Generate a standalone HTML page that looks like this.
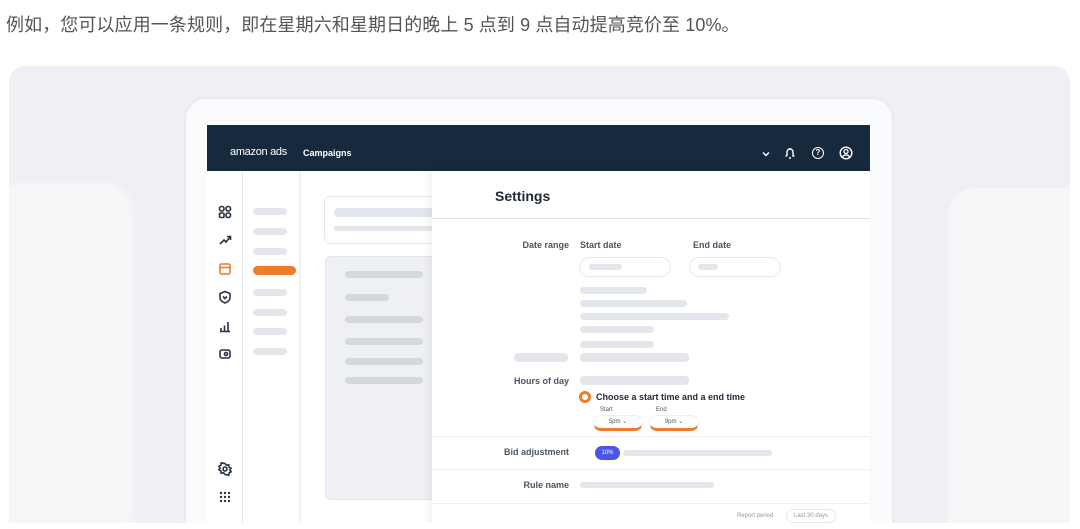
<!DOCTYPE html>
<html><head><meta charset="utf-8"><style>
*{margin:0;padding:0;box-sizing:border-box}
body{width:1080px;height:529px;background:#fff;position:relative;overflow:hidden;font-family:"Liberation Sans","Noto Sans CJK SC",sans-serif}
.a{position:absolute}
.bar{position:absolute;background:#e3e6ea;border-radius:4px;height:7px}
.lbl{position:absolute;font-size:9px;font-weight:bold;color:#4a5565;text-align:right;width:110px}
svg.i{position:absolute;left:218px;width:14px;height:14px;fill:none;stroke:#2a3444;stroke-width:1.6}
</style></head><body>
<div class="a" style="left:6px;top:11px;font-size:18px;color:#555;letter-spacing:0.1px">例如，您可以应用一条规则，即在星期六和星期日的晚上 5 点到 9 点自动提高竞价至 10%。</div>
<div class="a" style="left:9px;top:66px;width:1061px;height:460px;background:#eef0f4;border-radius:16px 16px 0 0"></div>
<div class="a" style="left:9px;top:188px;width:118px;height:340px;background:#f5f6f8;border-radius:0 26px 0 0;box-shadow:2px -2px 10px rgba(255,255,255,.9)"></div>
<div class="a" style="left:948px;top:188px;width:122px;height:340px;background:#f5f6f8;border-radius:26px 0 0 0"></div>
<div class="a" style="left:186px;top:99px;width:706px;height:430px;background:#fafbfc;border-radius:20px 20px 0 0;box-shadow:0 0 6px rgba(0,0,0,.06)"></div>
<div class="a" style="left:207px;top:125px;width:663px;height:46px;background:#172a3d"></div>
<div class="a" style="left:230px;top:146px;color:#fff;font-size:11px;letter-spacing:-0.3px">amazon ads</div>
<div class="a" style="left:303px;top:148px;color:#fff;font-size:9px;font-weight:bold">Campaigns</div>
<svg class="a" style="left:760px;top:148px" width="12" height="12" viewBox="0 0 12 12"><path d="M3 4.5l3 3 3-3" stroke="#fff" stroke-width="1.4" fill="none"/></svg>
<svg class="a" style="left:783px;top:146px" width="14" height="14" viewBox="0 0 14 14"><path d="M4 10V6a3 3 0 016 0v4h1.5M2.5 10H4M6 12h2M7 2v1" stroke="#fff" stroke-width="1.4" fill="none"/></svg>
<div class="a" style="left:812px;top:147px;width:12px;height:12px;border:1.5px solid #fff;border-radius:50%;color:#fff;font-size:8px;text-align:center;line-height:9px;font-weight:bold">?</div>
<svg class="a" style="left:839px;top:146px" width="14" height="14" viewBox="0 0 14 14"><circle cx="7" cy="7" r="5.8" stroke="#fff" stroke-width="1.4" fill="none"/><circle cx="7" cy="5.5" r="2" stroke="#fff" stroke-width="1.3" fill="none"/><path d="M3.5 11a4 4 0 017 0" stroke="#fff" stroke-width="1.3" fill="none"/></svg>
<div class="a" style="left:207px;top:171px;width:663px;height:358px;background:#fff"></div>
<div class="a" style="left:242px;top:171px;width:1px;height:358px;background:#e6e8ec"></div>
<div class="a" style="left:299px;top:171px;width:2px;height:358px;background:#eef0f3"></div>
<svg class="i" style="top:205px" viewBox="0 0 14 14"><rect x="1.5" y="1.5" width="4.5" height="4.5" rx="2"/><rect x="8" y="1.5" width="4.5" height="4.5" rx="2"/><rect x="1.5" y="8" width="4.5" height="4.5" rx="1"/><rect x="8" y="8" width="4.5" height="4.5" rx="2"/></svg>
<svg class="i" style="top:233px" viewBox="0 0 14 14"><path d="M2 11l4-4 2 2 4-5M9 3.5h3.5V7"/></svg>
<svg class="i" style="top:262px;stroke:#f07b2a" viewBox="0 0 14 14"><rect x="2" y="2" width="10" height="10" rx="1.5"/><path d="M2 5.5h10"/></svg>
<svg class="i" style="top:290px" viewBox="0 0 14 14"><path d="M7 1.5l5 2v4c0 2.5-2.5 4.5-5 5.5-2.5-1-5-3-5-5.5v-4z"/><path d="M5 6.5l2 2 2-2" /></svg>
<svg class="i" style="top:319px" viewBox="0 0 14 14"><path d="M3 12V9M6.5 12V6.5M10 12V3M2 12.5h10"/></svg>
<svg class="i" style="top:347px" viewBox="0 0 14 14"><rect x="2" y="3" width="10" height="8" rx="2"/><circle cx="8" cy="7" r="1.5"/></svg>
<svg class="i" style="top:462px" viewBox="0 0 14 14"><circle cx="7" cy="7" r="2"/><path d="M7 1.5l1.5 1.8 2.3-.5.3 2.3 2 1.2-1.3 1.7 1.3 1.7-2 1.2-.3 2.3-2.3-.5L7 12.5 5.5 10.7l-2.3.5-.3-2.3-2-1.2 1.3-1.7L.9 4.3l2-1.2.3-2.3 2.3.5z"/></svg>
<svg class="i" style="top:490px;fill:#2a3444;stroke:none" viewBox="0 0 14 14"><circle cx="3" cy="3" r="1.2"/><circle cx="7" cy="3" r="1.2"/><circle cx="11" cy="3" r="1.2"/><circle cx="3" cy="7" r="1.2"/><circle cx="7" cy="7" r="1.2"/><circle cx="11" cy="7" r="1.2"/><circle cx="3" cy="11" r="1.2"/><circle cx="7" cy="11" r="1.2"/><circle cx="11" cy="11" r="1.2"/></svg>
<div class="bar" style="left:253px;top:208px;width:34px"></div>
<div class="bar" style="left:253px;top:228px;width:34px"></div>
<div class="bar" style="left:253px;top:248px;width:34px"></div>
<div class="a" style="left:253px;top:266px;width:43px;height:9px;background:#f07b2a;border-radius:5px"></div>
<div class="bar" style="left:253px;top:289px;width:34px"></div>
<div class="bar" style="left:253px;top:309px;width:34px"></div>
<div class="bar" style="left:253px;top:328px;width:34px"></div>
<div class="bar" style="left:253px;top:348px;width:34px"></div>
<div class="a" style="left:324px;top:196px;width:120px;height:48px;border:1px solid #e6e8ec;border-radius:5px"></div>
<div class="bar" style="left:334px;top:208px;width:100px;height:9px"></div>
<div class="bar" style="left:334px;top:226px;width:100px;height:5px"></div>
<div class="a" style="left:325px;top:256px;width:120px;height:244px;background:#eef0f4;border:1px solid #e3e6ea;border-radius:6px"></div>
<div class="bar" style="left:345px;top:271px;width:78px;background:#d4d8de"></div>
<div class="bar" style="left:345px;top:294px;width:44px;background:#d4d8de"></div>
<div class="bar" style="left:345px;top:316px;width:78px;background:#d4d8de"></div>
<div class="bar" style="left:345px;top:338px;width:78px;background:#d4d8de"></div>
<div class="bar" style="left:345px;top:358px;width:78px;background:#d4d8de"></div>
<div class="bar" style="left:345px;top:377px;width:78px;background:#d4d8de"></div>
<div class="a" style="left:432px;top:171px;width:438px;height:358px;background:#fff;box-shadow:-4px 0 8px rgba(0,0,0,.05)"></div>
<div class="a" style="left:495px;top:188px;font-size:14px;font-weight:bold;color:#1f2937">Settings</div>
<div class="a" style="left:432px;top:218px;width:438px;height:1px;background:#dde0e5"></div>
<div class="lbl" style="left:459px;top:240px">Date range</div>
<div class="a" style="left:580px;top:240px;font-size:9px;font-weight:bold;color:#4a5565">Start date</div>
<div class="a" style="left:693px;top:240px;font-size:9px;font-weight:bold;color:#4a5565">End date</div>
<div class="a" style="left:579px;top:257px;width:92px;height:20px;border:1px solid #e6e8ec;border-radius:10px"></div>
<div class="bar" style="left:589px;top:264px;width:33px;height:6px"></div>
<div class="a" style="left:689px;top:257px;width:92px;height:20px;border:1px solid #e6e8ec;border-radius:10px"></div>
<div class="bar" style="left:698px;top:264px;width:20px;height:6px"></div>
<div class="bar" style="left:580px;top:287px;width:67px"></div>
<div class="bar" style="left:580px;top:300px;width:107px"></div>
<div class="bar" style="left:580px;top:313px;width:149px"></div>
<div class="bar" style="left:580px;top:326px;width:74px"></div>
<div class="bar" style="left:580px;top:341px;width:74px"></div>
<div class="bar" style="left:514px;top:353px;width:54px;height:9px"></div>
<div class="bar" style="left:580px;top:353px;width:109px;height:9px"></div>
<div class="lbl" style="left:459px;top:376px">Hours of day</div>
<div class="bar" style="left:580px;top:376px;width:109px;height:9px"></div>
<div class="a" style="left:579px;top:391px;width:12px;height:12px;border:3px solid #f07b2a;border-radius:50%"></div>
<div class="a" style="left:596px;top:392px;font-size:9px;font-weight:bold;color:#1f2937">Choose a start time and a end time</div>
<div class="a" style="left:600px;top:407px;font-size:6px;color:#4a5565">Start</div>
<div class="a" style="left:656px;top:407px;font-size:6px;color:#4a5565">End</div>
<div class="a" style="left:593px;top:415px;width:50px;height:16px;border:1px solid #eee;border-bottom:3px solid #f07b2a;border-radius:8px;font-size:6px;text-align:center;line-height:13px;color:#555">5pm ⌄</div>
<div class="a" style="left:649px;top:415px;width:50px;height:16px;border:1px solid #eee;border-bottom:3px solid #f07b2a;border-radius:8px;font-size:6px;text-align:center;line-height:13px;color:#555">9pm ⌄</div>
<div class="a" style="left:432px;top:436px;width:438px;height:1px;background:#eceef1"></div>
<div class="lbl" style="left:459px;top:447px">Bid adjustment</div>
<div class="a" style="left:595px;top:446px;width:25px;height:14px;background:#4b55e0;border-radius:7px;color:#fff;font-size:6px;text-align:center;line-height:14px">10%</div>
<div class="bar" style="left:623px;top:450px;width:149px;height:6px"></div>
<div class="a" style="left:432px;top:469px;width:438px;height:1px;background:#eceef1"></div>
<div class="lbl" style="left:459px;top:480px">Rule name</div>
<div class="bar" style="left:580px;top:482px;width:134px;height:6px"></div>
<div class="a" style="left:432px;top:503px;width:438px;height:1px;background:#eceef1"></div>
<div class="a" style="left:737px;top:513px;font-size:6px;color:#999">Report period</div>
<div class="a" style="left:786px;top:509px;width:50px;height:14px;border:1px solid #e6e8ec;border-radius:7px;font-size:6px;color:#999;text-align:center;line-height:12px">Last 30 days</div>
<div class="a" style="left:0;top:523px;width:1080px;height:6px;background:#fff"></div>
</body></html>
